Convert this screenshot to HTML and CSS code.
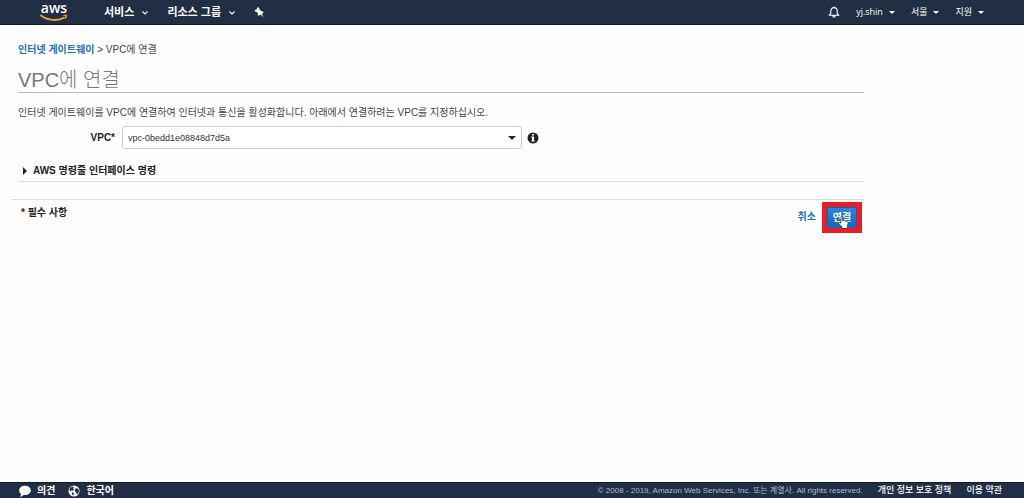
FILE: index.html
```
<!DOCTYPE html>
<html lang="ko">
<head>
<meta charset="UTF-8" />
<meta name="viewport" content="width=device-width, initial-scale=1.0"/>
<title>VPC에 연결</title>
<link rel="stylesheet" href="styles.css">
</head>
<body>
    <header class="top-nav">
        <a href="#" class="logo" aria-label="aws">
            <span>aws</span>
            <svg viewBox="0 0 28 8" width="28" height="8" aria-hidden="true">
                <path d="M1 1.500C8 6.800 18 7.200 24 3.800" fill="none" stroke="#f7a234" stroke-width="1.800" stroke-linecap="round"/>
                <path d="M22 1.300c2-.8 4.500-.8 5-.2s-.3 2.800-1.600 4.500c-.3-1.200.2-2.400 0-3.200-.6-.5-2-.5-3.400-1.100z" fill="#f7a234"/>
            </svg>
        </a>
        <nav class="main-menu">
            <button type="button">서비스 <svg class="chevron" viewBox="0 0 8 6" aria-hidden="true"><path d="M1.500 1.500 4 4l2.500-2.500"/></svg></button>
            <button type="button">리소스 그룹 <svg class="chevron" viewBox="0 0 8 6" aria-hidden="true"><path d="M1.500 1.500 4 4l2.500-2.500"/></svg></button>
            <button type="button" aria-label="고정">
                <svg viewBox="0 0 10 10" width="10" height="10" aria-hidden="true"><path d="M3 .8 4.500.2l.9 1 .1 1.600 2.100 1.500 1.400.1.500 1.400L7.900 7l1.500 2.700-.6.100-2.100-2.200L4.600 8.700l-.9-.8.200-1.700-1.500-1.500L.8 4.400.7 3.100 2.900 2.400z" fill="#fff"/></svg>
            </button>
        </nav>
        <nav class="account-menu">
            <button type="button" aria-label="알림">
                <svg viewBox="0 0 12 12" width="12" height="12" aria-hidden="true"><path d="M6 .5v1M1.200 9.200h9.600L9.200 7.300V5C9.200 3 7.800 1.600 6 1.600S2.800 3 2.800 5v2.300zM4.800 9.700c.1 2 2.300 2 2.400 0" fill="none" stroke="#fff" stroke-width="1.100" stroke-linejoin="round"/></svg>
            </button>
            <button type="button">yj.shin <span class="caret"></span></button>
            <button type="button">서울 <span class="caret"></span></button>
            <button type="button">지원 <span class="caret"></span></button>
        </nav>
    </header>

    <main>
        <div class="breadcrumb"><a href="#">인터넷 게이트웨이</a> &gt; VPC에 연결</div>
        <h1>VPC에 연결</h1>
        <p class="intro">인터넷 게이트웨이를 VPC에 연결하여 인터넷과 통신을 활성화합니다. 아래에서 연결하려는 VPC를 지정하십시오.</p>

        <form>
            <div class="field">
                <label for="vpc">VPC*</label>
                <div class="select-box">
                    <select id="vpc">
                        <option>vpc-0bedd1e08848d7d5a</option>
                    </select>
                    <span class="caret"></span>
                </div>
                <svg class="info" viewBox="0 0 12 12" width="12" height="12" aria-hidden="true">
                    <circle cx="6" cy="6" r="5.500" fill="#222"/>
                    <path d="M5 2h2v1.600H5zM4.300 4.600H7v3.900h.8v1.100H4.300V8.500H5V5.700h-.7z" fill="#fff"/>
                </svg>
            </div>

            <details>
                <summary>AWS 명령줄 인터페이스 명령</summary>
            </details>

            <div class="form-footer">
                <span class="required">* 필수 사항</span>
                <a href="#" class="cancel">취소</a>
                <div class="highlight">
                    <button type="button" class="connect">연결</button>
                    <svg class="cursor" viewBox="0 0 11 13" width="11" height="13" aria-hidden="true">
                        <path d="M3 1.200c0-1 1.600-1 1.600 0v3.300l3.600.7c1.400.3 2 .9 1.800 2.200L9.400 10.500V12.500H4V11L.8 7.600c-.8-1 .3-1.900 1.200-1.200l1 .8z" fill="#fff" stroke="#222" stroke-width=".7"/>
                    </svg>
                </div>
            </div>
        </form>
    </main>

    <footer class="bottom-bar">
        <button type="button">
            <svg viewBox="0 0 12 12" width="12" height="12" aria-hidden="true"><path d="M6 .8c3.300 0 5.800 2 5.800 4.600S9.300 10 6 10l-1.400-.1C3.500 11 2.300 11.600 1 11.700c.7-.8 1-1.700 1-2.800C.9 8 .2 6.800.2 5.400.2 2.800 2.700.8 6 .8z" fill="#fff"/></svg>
            의견
        </button>
        <button type="button">
            <svg viewBox="0 0 12 12" width="12" height="12" aria-hidden="true">
                <circle cx="6" cy="6" r="5.500" fill="#fff"/>
                <path d="M2 2.800 4.300 1.500l1.500.7-.6 1.300 1 .8-1.500 1.500-1.700-.4-.7 1L1.300 5zM7.500 3.200l2.300.2 1.200 2.400-1 3-1.300.8-.5-2.400-1.500-1.300zM3.800 7.300l2.200.8-.7 2.500-1.300-1z" fill="#232f42"/>
            </svg>
            한국어
        </button>
        <span class="copyright">© 2008 - 2019, Amazon Web Services, Inc. 또는 계열사. All rights reserved.</span>
        <a href="#">개인 정보 보호 정책</a>
        <a href="#">이용 약관</a>
    </footer>
</body>
</html>
```
FILE: styles.css
```
* {
    box-sizing: border-box;
}

body {
    margin: 0;
    min-height: 100vh;
    display: flex;
    flex-direction: column;
    font-family: "Liberation Sans", "Noto Sans CJK KR", sans-serif;
    font-size: 10px;
    line-height: 16px;
    color: #444;
    background: #fefefe;
}

button {
    padding: 0;
    border: none;
    background: none;
    color: inherit;
    font: inherit;
    cursor: pointer;
}

a {
    color: #2070b8;
    text-decoration: none;
}

.caret {
    border: 3px solid transparent;
    border-top-color: currentColor;
    border-bottom: none;
}

/* Top navigation */
.top-nav {
    display: flex;
    align-items: center;
    height: 25px;
    padding: 0 40px;
    background: #212f45;
    border-bottom: 1px solid #101b2e;
    color: #fff;
}

.logo {
    display: flex;
    flex-direction: column;
    align-items: center;
    width: 28px;
    margin-right: 36px;
    color: #fff;
    font-family: "Open Sans", sans-serif;
    font-size: 14px;
    font-weight: 600;
    line-height: 12px;
}

.main-menu,
.account-menu,
.main-menu button,
.account-menu button {
    display: flex;
    align-items: center;
}

.main-menu {
    gap: 18px;
    font-size: 11px;
    font-weight: bold;
}

.main-menu button {
    gap: 7px;
}

.chevron {
    width: 8px;
    height: 6px;
    margin-top: 2px;
    fill: none;
    stroke: #fff;
    stroke-width: 1.2;
}

.account-menu {
    gap: 16px;
    margin-left: auto;
    font-family: "Open Sans", "Noto Sans CJK KR", sans-serif;
    font-size: 9px;
}

.account-menu button {
    gap: 6px;
}

/* Page content */
main {
    flex: 1;
    margin-right: 160px;
    padding: 17px 0 0 18px;
}

.breadcrumb a {
    font-weight: bold;
}

h1 {
    margin: 11px 0 12px;
    border-bottom: 1px solid #bbb;
    color: #777;
    font-size: 20px;
    font-weight: 300;
    line-height: 23px;
}

.intro {
    margin: 0 0 5px;
}

.field {
    display: flex;
    align-items: center;
}

.field label {
    width: 97px;
    margin-right: 7px;
    color: #222;
    font-weight: bold;
    text-align: right;
}

.select-box {
    position: relative;
    width: 400px;
}

.select-box select {
    width: 100%;
    height: 23px;
    padding: 0 5px;
    appearance: none;
    border: 1px solid #ccc;
    border-radius: 3px;
    background: #fff;
    color: #333;
    font: inherit;
    font-size: 9px;
}

.select-box .caret {
    position: absolute;
    top: 10px;
    right: 6px;
    border-width: 4px;
    border-bottom: none;
    color: #222;
    pointer-events: none;
}

.info {
    margin-left: 5px;
}

details {
    margin-top: 14px;
    padding-bottom: 2px;
    border-bottom: 1px solid #ddd;
}

summary {
    display: flex;
    align-items: center;
    gap: 6px;
    padding-left: 5px;
    color: #222;
    font-weight: bold;
    cursor: pointer;
}

summary::before {
    content: "";
    border: 4px solid transparent;
    border-left: 4px solid #222;
    border-right: none;
}

.form-footer {
    display: flex;
    align-items: flex-start;
    margin: 17px 0 0 -7px;
    padding: 2px 2px 0 10px;
    border-top: 1px solid #ddd;
}

.required {
    margin-top: 3px;
    color: #222;
    font-weight: bold;
}

.cancel {
    margin: 7px 6px 0 auto;
    font-weight: bold;
}

.highlight {
    position: relative;
    padding: 5px;
    background: #ec1c24;
}

.connect {
    display: block;
    width: 30px;
    height: 21px;
    border: 1px solid #1a5fb0;
    background: linear-gradient(#2b86e0, #1767c0);
    color: #fff;
    font-weight: bold;
    line-height: 18px;
}

.cursor {
    position: absolute;
    top: 14px;
    left: 16px;
}

/* Bottom bar */
.bottom-bar {
    display: flex;
    align-items: center;
    padding: 0 22px 0 19px;
    background: #212f45;
    border-top: 1px solid #101b2e;
    color: #fff;
    line-height: 15px;
}

.bottom-bar button {
    display: flex;
    align-items: center;
    gap: 6px;
    margin-right: 13px;
    font-weight: bold;
}

.copyright {
    margin-left: auto;
    color: #b4bcc8;
    font-size: 8px;
}

.bottom-bar a {
    margin-left: 15px;
    color: #fff;
    font-size: 9px;
    font-weight: 500;
}
```
